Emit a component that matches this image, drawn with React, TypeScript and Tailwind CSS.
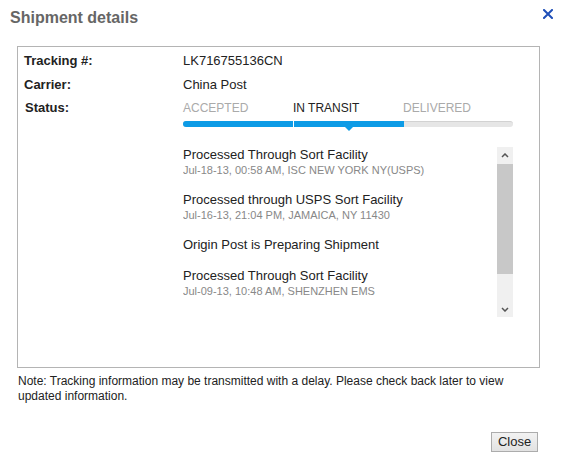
import React from 'react'

interface TrackEvent {
  title: string
  detail?: string
}

const events: TrackEvent[] = [
  { title: 'Processed Through Sort Facility', detail: 'Jul-18-13, 00:58 AM, ISC NEW YORK NY(USPS)' },
  { title: 'Processed through USPS Sort Facility', detail: 'Jul-16-13, 21:04 PM, JAMAICA, NY 11430' },
  { title: 'Origin Post is Preparing Shipment' },
  { title: 'Processed Through Sort Facility', detail: 'Jul-09-13, 10:48 AM, SHENZHEN EMS' },
  { title: 'Acceptance', detail: 'Jul-08-13, 16:22 PM, SHENZHEN EMS' },
]

const steps = ['ACCEPTED', 'IN TRANSIT', 'DELIVERED']

export default function App() {
  const current = 1

  return (
    <div className="w-[564px] h-[465px] bg-white text-[#222] flex flex-col" style={{ fontFamily: '"Liberation Sans", Arial, sans-serif' }}>
      {/* Header */}
      <div className="flex items-start">
        <h2 className="pl-[10px] pt-[8px] text-[16px] leading-[20px] font-bold text-[#666]">Shipment details</h2>
        <button className="ml-auto mr-[11px] mt-[9px]">
          <svg width="10" height="10" viewBox="0 0 10 10">
            <path d="M1 1 L9 9 M9 1 L1 9" stroke="#1f4fb8" strokeWidth="2" strokeLinecap="square" />
          </svg>
        </button>
      </div>

      {/* Details box */}
      <div className="ml-[17px] mt-[18px] w-[523px] h-[322px] border border-[#b4b4b4] pl-[6px] pt-[5px]">
        <div className="flex leading-[18px] text-[13px]">
          <div className="w-[159px] font-bold">Tracking #:</div>
          <div>LK716755136CN</div>
        </div>
        <div className="flex leading-[18px] text-[13px] mt-[6px]">
          <div className="w-[159px] font-bold">Carrier:</div>
          <div>China Post</div>
        </div>
        <div className="flex mt-[5px]">
          <div className="w-[159px] pl-[1px] font-bold text-[13px] leading-[18px]">Status:</div>
          <div className="w-[330px]">
            <div className="flex text-[12px] leading-[18px]">
              {steps.map((s, i) => (
                <div key={s} className={`w-[110px] ${i === current ? 'text-[#222]' : 'text-[#aaa]'}`}>{s}</div>
              ))}
            </div>
            {/* Progress bar */}
            <div className="relative mt-[4px] h-[6px] rounded-full bg-[#e6e6e6] border-t border-[#d2d2d2]">
              <div className="absolute left-0 top-[-1px] h-[6px] w-[221px] rounded-l-full bg-[#0d9be6] flex">
                <div className="ml-[110px] w-[1px] h-[6px] bg-white" />
              </div>
              <div className="absolute left-[162px] top-[5px] w-0 h-0 border-l-[4px] border-r-[4px] border-t-[4px] border-l-transparent border-r-transparent border-t-[#0d9be6]" />
            </div>

            {/* Event list */}
            <div className="mt-[20px] h-[170px] flex">
              <div className="w-[314px] h-[169px] overflow-hidden">
                {events.map((e, i) => (
                  <div key={i} className="mb-[15px]">
                    <div className="text-[13px] leading-[16px] text-[#222]">{e.title}</div>
                    {e.detail && <div className="text-[11px] leading-[14px] text-[#888]">{e.detail}</div>}
                  </div>
                ))}
              </div>
              {/* Scrollbar */}
              <div className="w-[16px] h-[170px] bg-[#f0f0f0] flex flex-col">
                <div className="h-[17px] flex items-center justify-center">
                  <svg width="8" height="5" viewBox="0 0 8 5">
                    <path d="M1 4 L4 1 L7 4" stroke="#555" strokeWidth="1.5" fill="none" />
                  </svg>
                </div>
                <div className="h-[110px] bg-[#c8c8c8]" />
                <div className="flex-1 flex items-end justify-center pb-[5px]">
                  <svg width="8" height="5" viewBox="0 0 8 5">
                    <path d="M1 1 L4 4 L7 1" stroke="#555" strokeWidth="1.5" fill="none" />
                  </svg>
                </div>
              </div>
            </div>
          </div>
        </div>
      </div>

      {/* Note */}
      <p className="ml-[18px] mt-[6px] w-[490px] text-[12px] leading-[15px] text-[#222]">
        Note: Tracking information may be transmitted with a delay. Please check back later to view updated information.
      </p>

      <div className="flex justify-end mr-[26px] mt-[28px]">
        <button className="w-[47px] h-[20px] border border-[#acacac] bg-gradient-to-b from-[#f2f2f2] to-[#e2e2e2] text-[13px] leading-[18px] text-[#222]">
          Close
        </button>
      </div>
    </div>
  )
}
